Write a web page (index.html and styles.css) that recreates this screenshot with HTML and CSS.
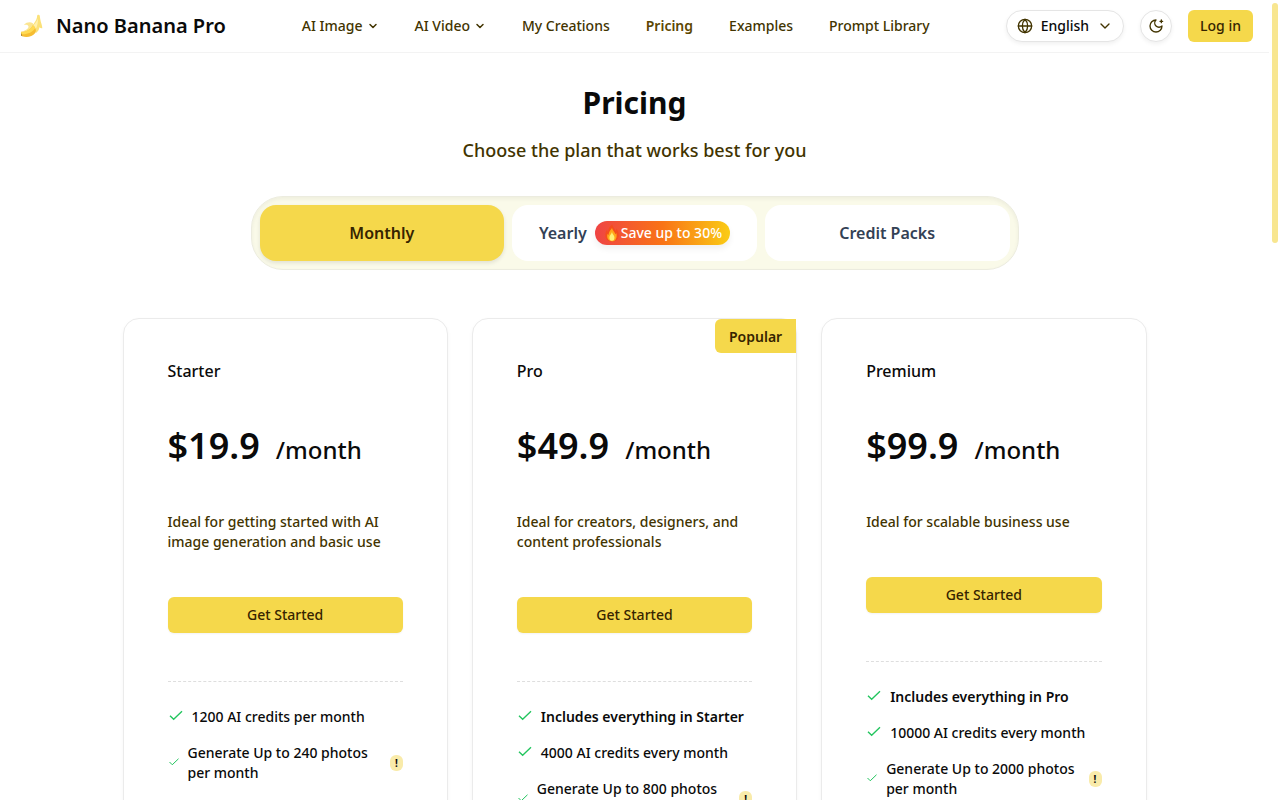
FILE: index.html
```html
<!DOCTYPE html>
<html lang="en">
<head>
    <meta charset="UTF-8">
    <meta name="viewport" content="width=device-width, initial-scale=1.0">
    <title>Nano Banana Pro - Pricing</title>
    <link rel="stylesheet" href="styles.css">
</head>
<body>
    <svg class="sprite" aria-hidden="true">
        <symbol id="chevron" viewBox="0 0 24 24"><path d="m6 9 6 6 6-6"/></symbol>
        <symbol id="check" viewBox="0 0 24 24"><path d="M3 10l5.500 5.500L21 3.500"/></symbol>
    </svg>

    <header class="header">
        <a class="logo" href="#">
            <svg class="logo-icon" viewBox="0 0 24 24" aria-hidden="true">
                <path d="M17.300 1.300c.8-.7 2-.6 2.400.2.300 2 .5 4 1.100 6.200.8 2.300 1.500 4.500 1.500 6.600-1.200.2-2-.3-2.800-1.100-.3 2.200-1.500 4.300-3.500 5.800l-4-7.500c2.500-2.200 4.400-5.400 5-8.200.1-.8 0-1.400.3-2z" fill="#fbe178"/>
                <path d="M17.800 4.500c.4 3.500-.2 7.500-2.600 11.500l-2.500-4.200c2.400-1.900 4.200-4.400 5.100-7.300z" fill="#fff0ae"/>
                <path d="M3.800 10.800c2.800-2.700 6.500-3.200 9-1.500l1.700 4.700-5.500 4-7-.5c2.400-.7 4.300-1.700 5.700-3.100 1.300-1.400 1-2.700-.4-3.400-1.100-.5-2.300-.4-3.500-.2z" fill="#fbe591"/>
                <path d="M1.300 17.800c4.700.2 9-1.700 11.600-6.500 2.600 1.700 4 5 2.300 7.700-2.800 4-9 5-13 3.300-1.300-.8-1.600-3.200-.9-4.500z" fill="#f6bd32"/>
                <path d="M1.300 17.800c4.700.2 9-1.700 11.600-6.500 1 .7 1.800 1.600 2.300 2.700-2.800 4.500-8 6.700-14 6.200-.2-.8-.2-1.700.1-2.400z" fill="#ffda52"/>
                <path d="m1 18.800 1.300 3.400-1.200-.7z" fill="#8a6a2a"/>
            </svg>
            <span>Nano Banana Pro</span>
        </a>
        <nav class="nav">
            <a href="#">AI Image <svg class="icon icon-xs"><use href="#chevron"/></svg></a>
            <a href="#">AI Video <svg class="icon icon-xs"><use href="#chevron"/></svg></a>
            <a href="#">My Creations</a>
            <a class="active" href="#">Pricing</a>
            <a href="#">Examples</a>
            <a href="#">Prompt Library</a>
        </nav>
        <div class="actions">
            <button class="language" type="button">
                <svg class="icon" viewBox="0 0 24 24"><circle cx="12" cy="12" r="10"/><path d="M12 2a14.500 14.500 0 0 0 0 20 14.500 14.500 0 0 0 0-20M2 12h20"/></svg>
                <span>English</span>
                <svg class="icon"><use href="#chevron"/></svg>
            </button>
            <button class="theme" type="button" aria-label="Toggle theme">
                <svg class="icon" viewBox="0 0 24 24"><path d="M12 3a6 6 0 0 0 9 9 9 9 0 1 1-9-9M20 3v4M22 5h-4"/></svg>
            </button>
            <button class="login" type="button">Log in</button>
        </div>
    </header>

    <main class="main">
        <h1 class="title">Pricing</h1>
        <p class="subtitle">Choose the plan that works best for you</p>

        <div class="tabs">
            <button class="tab selected" type="button">Monthly</button>
            <button class="tab" type="button">
                Yearly
                <span class="save">
                    <svg class="fire" viewBox="1 0 14 16" aria-hidden="true">
                        <path d="M8.200.5c.5 2.500 2.300 3.500 2.900 5.700.5-.4.700-1.100.8-1.900 1.700 2 2.300 4.200 2 6.500-.4 3-2.700 4.800-5.900 4.800s-5.600-1.900-5.900-4.800c-.2-2.200.4-4.200 1.500-6 .1 1 .4 1.700.9 2.200C4.700 4.300 5.700 2 8.200.5z" fill="#f44e1c"/>
                        <path d="M8 3.500c.4 2 2.700 3.700 3 5.700.4-.3.700-.8.9-1.300.8 4-.4 7.400-3.900 7.400s-4.900-3.200-4-6.600c.2.500.5.900.9 1.100C5.100 7.300 6.500 5.500 8 3.500z" fill="#ffa71a"/>
                        <path d="M8 7c.2 1.800 2.200 2.900 2.200 5 0 1.800-.8 2.900-2.300 2.900s-2.200-1.100-2.200-2.900C5.700 9.900 7.500 8.800 8 7z" fill="#fff176"/>
                    </svg>Save up to 30%
                </span>
            </button>
            <button class="tab" type="button">Credit Packs</button>
        </div>

        <div class="plans">
            <section class="card">
                <h2 class="plan">Starter</h2>
                <p class="price"><span class="amount">$19.9</span><span class="period">/month</span></p>
                <p class="description">Ideal for getting started with AI image generation and basic use</p>
                <button class="start" type="button">Get Started</button>
                <ul class="features">
                    <li><svg class="check"><use href="#check"/></svg><span>1200 AI credits per month</span></li>
                    <li class="noted"><svg class="check"><use href="#check"/></svg><span>Generate Up to 240 photos per month</span><span class="info">!</span></li>
                </ul>
            </section>

            <section class="card">
                <span class="popular">Popular</span>
                <h2 class="plan">Pro</h2>
                <p class="price"><span class="amount">$49.9</span><span class="period">/month</span></p>
                <p class="description">Ideal for creators, designers, and content professionals</p>
                <button class="start" type="button">Get Started</button>
                <ul class="features">
                    <li><svg class="check"><use href="#check"/></svg><strong>Includes everything in Starter</strong></li>
                    <li><svg class="check"><use href="#check"/></svg><span>4000 AI credits every month</span></li>
                    <li class="noted"><svg class="check"><use href="#check"/></svg><span>Generate Up to 800 photos per month</span><span class="info">!</span></li>
                </ul>
            </section>

            <section class="card">
                <h2 class="plan">Premium</h2>
                <p class="price"><span class="amount">$99.9</span><span class="period">/month</span></p>
                <p class="description">Ideal for scalable business use</p>
                <button class="start" type="button">Get Started</button>
                <ul class="features">
                    <li><svg class="check"><use href="#check"/></svg><strong>Includes everything in Pro</strong></li>
                    <li><svg class="check"><use href="#check"/></svg><span>10000 AI credits every month</span></li>
                    <li class="noted"><svg class="check"><use href="#check"/></svg><span>Generate Up to 2000 photos per month</span><span class="info">!</span></li>
                </ul>
            </section>
        </div>
    </main>

    <div class="scroll-thumb"></div>
</body>
</html>
```
FILE: styles.css
```css
* {
    box-sizing: border-box;
}
body {
    margin: 0;
    padding-right: 11px;
    background-color: #fff;
    color: #0a0a0a;
    font-family: 'Noto Sans', sans-serif;
    font-size: 14px;
    line-height: 20px;
    font-weight: 500;
}
h1, h2, p, ul {
    margin: 0;
    padding: 0;
}
a {
    color: inherit;
    text-decoration: none;
}
button {
    font: inherit;
    color: inherit;
    border: none;
    padding: 0;
    cursor: pointer;
}
.sprite {
    display: none;
}
.icon {
    width: 16px;
    height: 16px;
    fill: none;
    stroke: #423400;
    stroke-width: 2;
    stroke-linecap: round;
    stroke-linejoin: round;
}
.icon-xs {
    width: 12px;
    height: 12px;
    stroke-width: 3;
}

/* header */
.header {
    display: flex;
    justify-content: space-between;
    align-items: center;
    height: 53px;
    padding: 0 16px 0 20px;
    border-bottom: 1px solid #f3f3f3;
}
.logo {
    display: flex;
    align-items: center;
    gap: 12px;
    font-size: 20px;
    line-height: 28px;
    font-weight: 600;
}
.logo-icon {
    width: 24px;
    height: 24px;
}
.nav {
    display: flex;
    gap: 36px;
    color: #423400;
}
.nav a {
    display: flex;
    align-items: center;
    gap: 4px;
}
.nav .active {
    font-weight: 600;
    color: #5c4700;
}
.actions {
    display: flex;
    align-items: center;
    gap: 16px;
}
.language, .theme {
    display: flex;
    align-items: center;
    justify-content: center;
    height: 32px;
    background-color: #fff;
    border: 1px solid #e5e5e5;
    border-radius: 16px;
    box-shadow: 0 2px 4px rgba(0, 0, 0, 0.06);
}
.language {
    gap: 8px;
    padding: 0 10px;
}
.theme {
    width: 32px;
}
.login {
    height: 32px;
    padding: 0 12px;
    border-radius: 6px;
    background-color: #f5d84b;
    color: #362400;
}

/* heading */
.main {
    padding: 32px 16px;
    text-align: center;
}
.title {
    font-size: 30px;
    line-height: 36px;
    font-weight: 700;
}
.subtitle {
    margin-top: 15px;
    font-size: 18px;
    line-height: 28px;
    color: #423400;
}

/* billing period */
.tabs {
    display: grid;
    grid-template-columns: repeat(3, 1fr);
    gap: 8px;
    max-width: 768px;
    margin: 32px auto 48px;
    padding: 8px;
    border: 1px solid #ececdf;
    border-radius: 32px;
    background-color: #fafae9;
    box-shadow: inset 0 2px 4px rgba(0, 0, 0, 0.05);
}
.tab {
    display: flex;
    align-items: center;
    justify-content: center;
    gap: 8px;
    height: 56px;
    border-radius: 16px;
    background-color: #fff;
    color: #334155;
    font-size: 16px;
    font-weight: 600;
}
.tab.selected {
    background-color: #f5d84b;
    color: #362400;
    box-shadow: 0 2px 4px rgba(0, 0, 0, 0.1);
}
.save {
    display: flex;
    align-items: center;
    height: 24px;
    padding: 0 8px;
    border-radius: 12px;
    background: linear-gradient(to right, #ef4444, #f97316, #facc15);
    box-shadow: 0 4px 6px rgba(0, 0, 0, 0.06);
    color: #fff;
    font-size: 14px;
    font-weight: 500;
}
.fire {
    width: 18px;
    height: 18px;
}

/* plans */
.plans {
    display: grid;
    grid-template-columns: repeat(3, 1fr);
    gap: 24px;
    max-width: 1024px;
    margin: 0 auto;
    text-align: left;
}
.card {
    position: relative;
    padding: 44px;
    border: 1px solid #ebebeb;
    border-radius: 16px;
    background-color: #fff;
    box-shadow: 0 2px 4px rgba(0, 0, 0, 0.04);
}
.popular {
    position: absolute;
    top: 0;
    right: 0;
    padding: 8px 14px 6px;
    border-radius: 6px 0 0 6px;
    background-color: #f5d84b;
    color: #362400;
    font-weight: 600;
}
.plan {
    font-size: 16px;
    line-height: 16px;
    font-weight: 500;
}
.price {
    display: flex;
    align-items: baseline;
    gap: 16px;
    margin: 47px 0 46px;
}
.amount {
    font-size: 36px;
    line-height: 40px;
    font-weight: 600;
}
.period {
    font-size: 24px;
    line-height: 24px;
}
.description {
    color: #423400;
}
.start {
    width: 100%;
    height: 36px;
    margin: 45px 0 48px;
    border-radius: 6px;
    background-color: #f5d84b;
    color: #362400;
    box-shadow: 0 1px 2px rgba(0, 0, 0, 0.05);
}
.features {
    display: flex;
    flex-direction: column;
    gap: 16px;
    padding-top: 25px;
    border-top: 1px dashed #dedede;
    list-style: none;
}
.features li {
    display: flex;
    align-items: center;
    gap: 8px;
}
.features strong {
    font-weight: 600;
}
.check {
    flex: none;
    width: 16px;
    height: 16px;
    fill: none;
    stroke: #22c55e;
    stroke-width: 2;
}
.noted .check {
    width: 12px;
    height: 12px;
}
.info {
    flex: none;
    width: 13px;
    margin-left: auto;
    border-radius: 6px;
    background-color: #f9ebaa;
    font-size: 10px;
    line-height: 16px;
    font-weight: 700;
    text-align: center;
}

.scroll-thumb {
    position: fixed;
    top: 3px;
    right: 2px;
    width: 6px;
    height: 30vh;
    border-radius: 3px;
    background-color: #f8e690;
}
```
